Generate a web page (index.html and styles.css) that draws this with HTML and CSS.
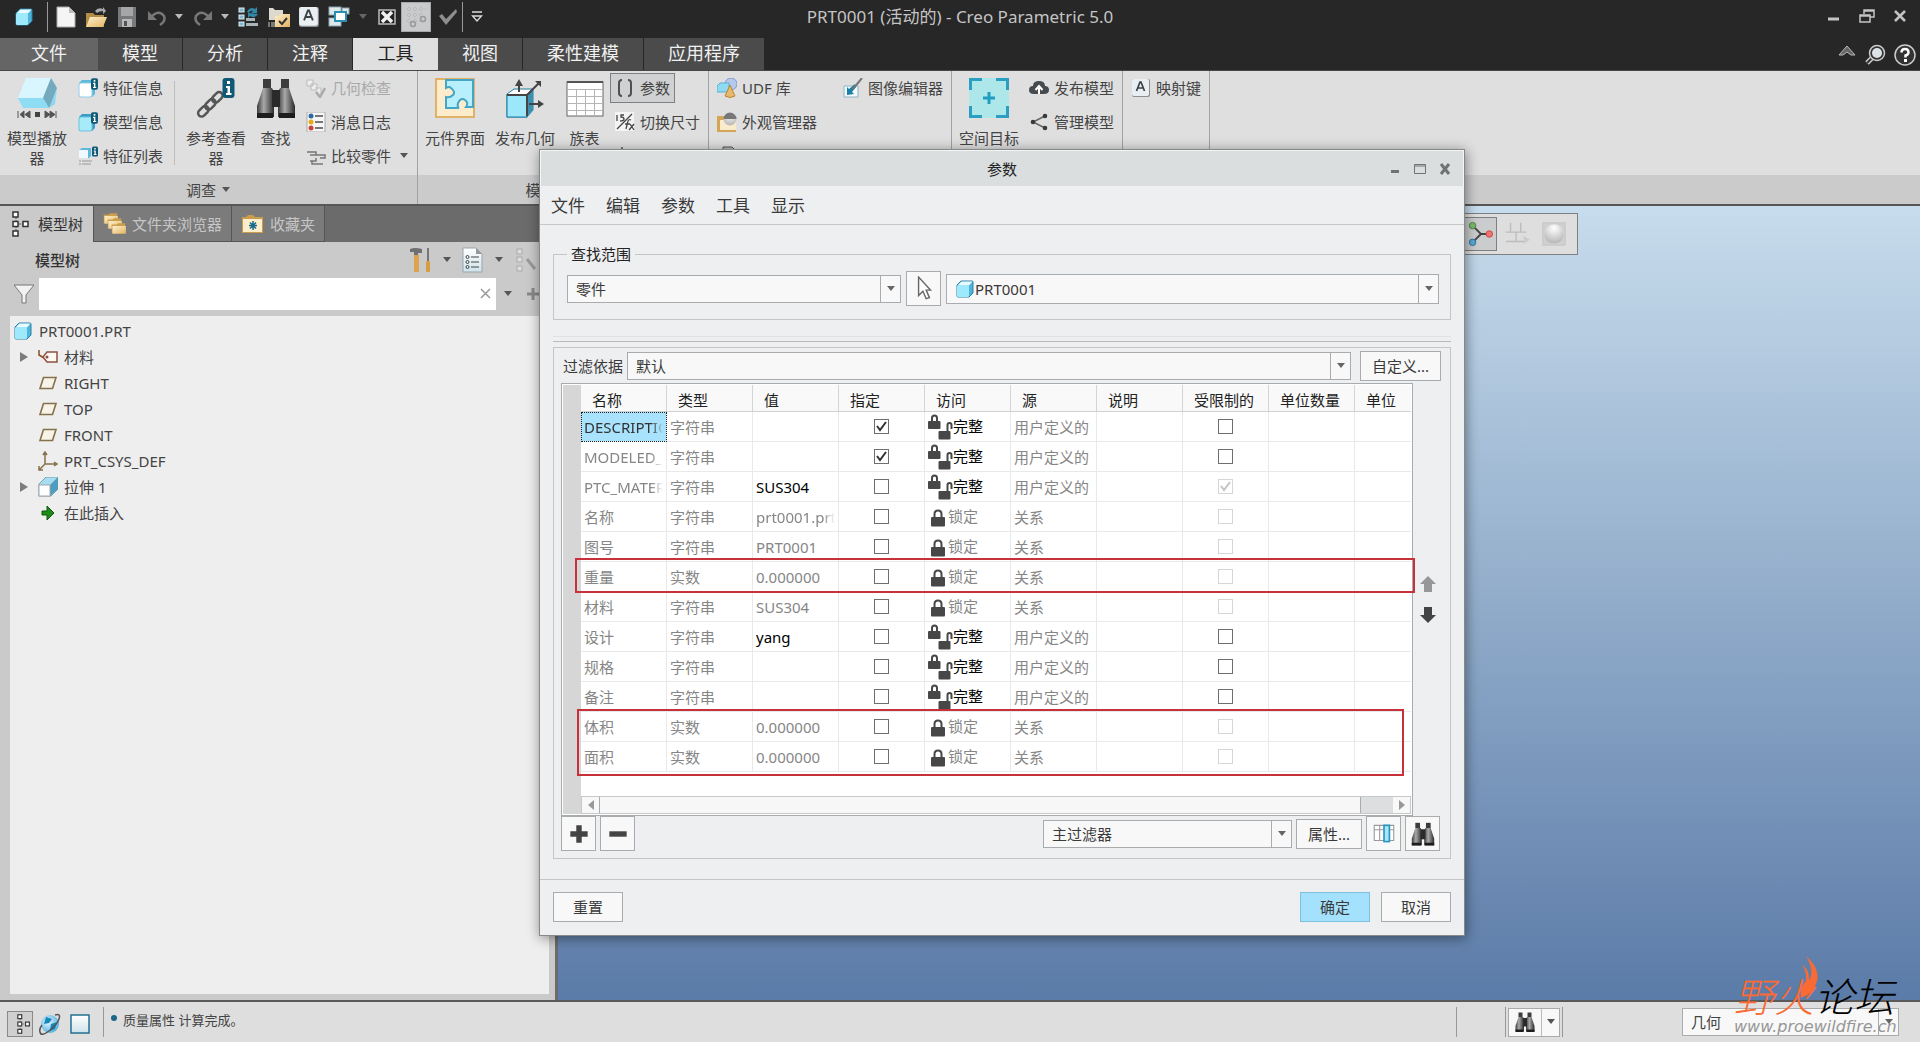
FILE: index.html
```html
<!DOCTYPE html>
<html lang="zh-CN">
<head>
<meta charset="utf-8">
<title>PRT0001 (活动的) - Creo Parametric 5.0</title>
<link rel="stylesheet" href="styles.css">
</head>
<body>
<svg class="defs" aria-hidden="true">
  <defs>
    <linearGradient id="g-cyan" x1="0" y1="0" x2="1" y2="1"><stop offset="0" stop-color="#d6f5fe"/><stop offset="1" stop-color="#7fd3ef"/></linearGradient>
    <linearGradient id="g-page" x1="0" y1="0" x2="0" y2="1"><stop offset="0" stop-color="#ffffff"/><stop offset="1" stop-color="#cfe3ea"/></linearGradient>
    <linearGradient id="g-barrel" x1="0" y1="0" x2="1" y2="0"><stop offset="0" stop-color="#3a3a3a"/><stop offset=".4" stop-color="#a9a9a9"/><stop offset="1" stop-color="#2a2a2a"/></linearGradient>
    <linearGradient id="g-gold" x1="0" y1="0" x2="1" y2="1"><stop offset="0" stop-color="#fff0cf"/><stop offset="1" stop-color="#e3b45e"/></linearGradient>
    <radialGradient id="g-ball" cx=".5" cy=".2" r=".7"><stop offset="0" stop-color="#ffffff"/><stop offset="1" stop-color="#bdbdbd"/></radialGradient>
    <radialGradient id="g-globe" cx=".4" cy=".4" r=".6"><stop offset="0" stop-color="#e5f7ff"/><stop offset="1" stop-color="#5bb4de"/></radialGradient>
    <symbol id="i-cube" viewBox="0 0 20 20"><path d="M2 6 6 2H17Q18 2 18 3V14L14 18H3Q2 18 2 17Z" fill="#4fb4dc" stroke="#2f7fa3"/><path d="M2.500 6.500 6.500 2.500H17.500L14 6.500Z" fill="#e8fbff"/><rect x="2" y="6" width="12" height="12" rx="1.500" fill="#9ee9fb"/></symbol>
    <symbol id="i-find" viewBox="0 0 40 40"><path d="M7 1H15V10H7ZM25 1H33V10H25Z" fill="#3c3c3c"/><path d="M7 10H16L18 14V39H1V28Z" fill="url(#g-barrel)"/><path d="M33 10H24L22 14V39H39V28Z" fill="url(#g-barrel)"/><rect x="16" y="12" width="8" height="17" fill="#2a2a2a"/><path d="M1 35H17V40H1ZM23 35H39V40H23Z" fill="#1d1d1d"/></symbol>
    <symbol id="i-info" viewBox="0 0 12 20"><rect x="0" y="0" width="12" height="20" rx="3" fill="#0f5876"/><rect x="4.500" y="3" width="3" height="3" fill="#fff"/><path d="M3.500 8H7.500V15H9V17H3.500V15H5V10H3.500Z" fill="#fff"/></symbol>
    <symbol id="i-nodes" viewBox="0 0 18 26"><path d="M4 6V20M4 13H12" stroke="#555" stroke-dasharray="2 1" fill="none"/><g fill="#fff" stroke="#333" stroke-width="1.500"><rect x="1" y="1" width="5" height="5"/><rect x="1" y="10.500" width="5" height="5"/><rect x="1" y="20" width="5" height="5"/><rect x="11" y="10.500" width="5" height="5"/></g></symbol>
    <symbol id="i-plane" viewBox="0 0 20 20"><path d="M5.500 4.500H18L14.500 15.500H2Z" fill="#f7f3e8" stroke="#85714a" stroke-width="1.600"/></symbol>
    <symbol id="i-lock" viewBox="0 0 16 18"><path d="M4.500 8V5Q4.500 1.500 8 1.500T11.500 5V8" fill="none" stroke="#474747" stroke-width="2"/><rect x="1" y="8" width="14" height="9.500" rx="1" fill="#474747"/></symbol>
    <symbol id="i-full" viewBox="0 0 26 26"><path d="M5 8V4Q5 1.500 7.500 1.500T10 4V8" fill="none" stroke="#474747" stroke-width="2"/><rect x="1" y="7" width="12.500" height="8" rx="1" fill="#474747"/><path d="M20.500 17V11Q20.500 9 22.500 9T24.500 11V15" fill="none" stroke="#474747" stroke-width="2"/><rect x="11.500" y="17" width="12" height="8.500" rx="1" fill="#474747"/></symbol>
    <symbol id="i-key" viewBox="0 0 20 20"><rect x="1" y="1" width="18" height="18" rx="2" fill="#8a8f92"/><rect x="1" y="1" width="17" height="17" rx="2" fill="#e9eff2"/><path d="M5.500 13 9 4H10L13.500 13M7 10H12" fill="none" stroke="#3c4347" stroke-width="1.700"/></symbol>
    <symbol id="i-folder" viewBox="0 0 24 24"><path d="M1 5H8L10 3H20V17H1Z" fill="#c99d4b"/><path d="M2 7H21V18H2Z" fill="url(#g-gold)"/></symbol>
    <symbol id="i-caret" viewBox="0 0 10 6"><path d="M1 0H9L5 5Z" fill="currentColor"/></symbol>
  </defs>
</svg>

<header class="titlebar">
  <div class="quick">
    <svg class="q20 app" viewBox="0 0 20 20"><use href="#i-cube"/></svg>
    <i class="vline"></i>
    <button class="q22" aria-label="新建"><svg viewBox="0 0 22 22"><path d="M2 1H14L20 7V21H2Z" fill="#f5f5f5" stroke="#aaa"/><path d="M14 1V7H20Z" fill="#bbb"/></svg></button>
    <button class="q22 g8" aria-label="打开"><svg viewBox="0 0 22 22"><path d="M1 7H8L10 9H19V21H1Z" fill="#b38c46"/><path d="M5 11H22L18 21H1Z" fill="url(#g-gold)"/><path d="M10 5Q13 1 18 3V1L21 5L18 8V5Q14 5 12 7Z" fill="#aaa"/></svg></button>
    <button class="q20 g10" aria-label="保存"><svg viewBox="0 0 20 20"><path d="M1 0H19V20H1Z" fill="#77797a"/><rect x="4" y="0" width="12" height="9" fill="#a4a6a7"/><rect x="5" y="12" width="10" height="8" fill="#b7b9ba"/><rect x="7" y="14" width="3" height="5" fill="#555"/></svg></button>
    <button class="q20 g10" aria-label="撤消"><svg viewBox="0 0 20 20"><path d="M1 4V13H10Z" fill="#777"/><path d="M4 10Q12 2 17 9Q19 14 13 18" fill="none" stroke="#777" stroke-width="2.500"/></svg></button>
    <button class="qc g8 light" aria-label="撤消列表"><svg viewBox="0 0 10 6"><use href="#i-caret"/></svg></button>
    <button class="q20 g10" aria-label="重做"><svg viewBox="0 0 20 20"><path d="M19 4V13H10Z" fill="#777"/><path d="M16 10Q8 2 3 9Q1 14 7 18" fill="none" stroke="#777" stroke-width="2.500"/></svg></button>
    <button class="qc g8 light" aria-label="重做列表"><svg viewBox="0 0 10 6"><use href="#i-caret"/></svg></button>
    <button class="q22 g8" aria-label="重新生成"><svg viewBox="0 0 22 22"><g fill="#7fb9cf" stroke="#dfeff4"><rect x="1" y="2" width="5" height="4"/><rect x="1" y="9" width="5" height="4"/><rect x="1" y="16" width="5" height="4"/></g><path d="M8 12H17V15H8ZM8 17H20V20H8Z" fill="#a9b4b8"/><path d="M9 6Q12 0 17 3L19 1V7H13L15 5Q12 4 11 7ZM20 8Q17 13 12 10L10 12V7" fill="#3287a8"/></svg></button>
    <button class="q22 g8" aria-label="工作目录"><svg viewBox="0 0 22 22"><path d="M1 2H5L7 4H15V14H1Z" fill="#ded9ce"/><path d="M7 10H11L13 8H22V21H7Z" fill="url(#g-gold)"/><path d="M11 15 14 18 19 12" fill="none" stroke="#333" stroke-width="2"/><path d="M1 16V21M4 16V21M6 16V21" stroke="#ccc"/></svg></button>
    <button class="q22 g8" aria-label="映射键"><svg viewBox="0 0 20 20"><use href="#i-key"/></svg></button>
    <button class="q22 g8" aria-label="窗口"><svg viewBox="0 0 22 22"><g fill="#dce8ec" stroke="#8ba4ad"><rect x="1" y="1" width="12" height="8"/><rect x="1" y="12" width="12" height="8"/><rect x="14" y="2" width="7" height="6"/></g><rect x="7" y="6" width="11" height="9" fill="#fff" stroke="#2b8fb4" stroke-width="2"/></svg></button>
    <button class="qc g8 dim" aria-label="窗口列表"><svg viewBox="0 0 10 6"><use href="#i-caret"/></svg></button>
    <button class="q20 g10" aria-label="关闭窗口"><svg viewBox="0 0 20 20"><path d="M2 3H18V17H2Z" fill="#222" stroke="#bcbcbc" stroke-width="1.500"/><path d="M5 5 15 15M15 5 5 15" stroke="#f0f0f0" stroke-width="3.500"/></svg></button>
    <button class="snap" aria-label="捕捉"><svg viewBox="0 0 28 28"><path d="M5 6H24M5 12H20M5 18H20M7 4V20M13 4V20M19 4V14" stroke="#aaa" stroke-dasharray="1 2"/><circle cx="21" cy="16" r="2.500" fill="none" stroke="#999" stroke-width="1.500"/><circle cx="11" cy="21" r="2.500" fill="none" stroke="#999" stroke-width="1.500"/></svg></button>
    <button class="q20 g8" aria-label="确认"><svg viewBox="0 0 20 20"><path d="M1 9 4 7 8 12 18 2 19 5 8 18Z" fill="#8e8e8e"/></svg></button>
    <i class="vline g4"></i>
    <button class="q20 g4" aria-label="自定义快速访问"><svg viewBox="0 0 20 20"><path d="M5 5H15" stroke="#ddd" stroke-width="1.500"/><path d="M5.500 9H14.500L10 14Z" fill="none" stroke="#ddd" stroke-width="1.300"/></svg></button>
  </div>
  <h1>PRT0001 (活动的) - Creo Parametric 5.0</h1>
  <div class="winctl">
    <button aria-label="最小化"><svg viewBox="0 0 16 16"><path d="M2 11H13" stroke="#c4c4c4" stroke-width="3"/></svg></button>
    <button aria-label="还原"><svg viewBox="0 0 16 16"><path d="M5 6V2H15V9H11M5 3H15" fill="none" stroke="#c4c4c4" stroke-width="1.500"/><path d="M1 7H11V14H1ZM1 8H11" fill="none" stroke="#c4c4c4" stroke-width="1.500"/></svg></button>
    <button aria-label="关闭"><svg viewBox="0 0 16 16"><path d="M3 3 13 13M13 3 3 13" stroke="#c4c4c4" stroke-width="2.500"/></svg></button>
  </div>
</header>

<nav class="tabs">
  <button class="file">文件</button><button>模型</button><button>分析</button><button>注释</button><button class="on">工具</button><button>视图</button><button>柔性建模</button><button>应用程序</button>
  <div class="tabtools">
    <button aria-label="折叠功能区"><svg viewBox="0 0 22 22"><path d="M3 11 11 2 19 11 15 11 11 8 7 11Z" fill="#666" stroke="#bbb"/></svg></button>
    <button aria-label="搜索"><svg viewBox="0 0 22 22"><path d="M7 14 2 19" stroke="#ccc" stroke-width="5"/><path d="M7 14 2 19" stroke="#333" stroke-width="2"/><circle cx="12" cy="9" r="7.500" fill="#333" stroke="#ccc" stroke-width="1.500"/><circle cx="12" cy="9" r="5" fill="#dde4e8"/></svg></button>
    <button aria-label="帮助"><svg viewBox="0 0 22 22"><circle cx="11" cy="11" r="10" fill="#333" stroke="#ccc" stroke-width="1.500"/><path d="M7.500 8.500Q7.500 5 11 5T14.500 8.500Q14.500 10.500 11.500 11.500V13.500" fill="none" stroke="#fff" stroke-width="2.500"/><rect x="10" y="15" width="3" height="3" fill="#fff"/></svg></button>
  </div>
</nav>

<section class="ribbon">
  <div class="group">
    <div class="tools lead">
      <button class="big"><svg viewBox="0 0 40 40"><path d="M9 0H34L40 10 38 26 32 30H6L1 20Z" fill="url(#g-cyan)"/><path d="M9 0H34L26 20H1Z" fill="#d9f5fd"/><path d="M34 0 40 10 32 30 26 20Z" fill="#74aabd"/><path d="M1 20H26L32 30H6Z" fill="#8fdcf5"/><path d="M1 33V40M7 33 3 36.500 7 40ZM13 33 8 36.500 13 40ZM28 33 33 36.500 28 40ZM33 33 38 36.500 33 40ZM39 33V40" stroke="#555" fill="#555"/><rect x="18" y="34" width="5" height="5" fill="#444"/></svg><span>模型播放器</span></button>
      <div class="col">
        <button class="small"><svg viewBox="0 0 20 20"><path d="M1 5 4 2H17V16L14 19H1Z" fill="#5eb8dc"/><rect x="1" y="5" width="13" height="14" rx="2" fill="#fff" stroke="#8fd0e8"/><svg x="13" y="0" width="7" height="12"><use href="#i-info"/></svg></svg>特征信息</button>
        <button class="small"><svg viewBox="0 0 20 20"><path d="M1 5 4 2H17V16L14 19H1Z" fill="#3b9cc6"/><rect x="1" y="5" width="13" height="14" rx="2" fill="#a7eafa" stroke="#6cc3e0"/><svg x="13" y="0" width="7" height="12"><use href="#i-info"/></svg></svg>模型信息</button>
        <button class="small"><svg viewBox="0 0 20 20"><path d="M1 4 4 2H13V10L11 12H1Z" fill="#5eb8dc"/><rect x="1" y="4" width="9" height="8" fill="#eefaff"/><path d="M1 15H14M1 18H13" stroke="#999" stroke-dasharray="2 1 9 0"/><svg x="14" y="0" width="6" height="11"><use href="#i-info"/></svg></svg>特征列表</button>
      </div>
      <i class="rule"></i>
      <button class="big"><svg viewBox="0 0 40 40"><g fill="none" stroke="#555" stroke-width="2.500"><rect x="1" y="30" width="12" height="7" rx="3.500" transform="rotate(-45 7 33)"/><rect x="8" y="23" width="12" height="7" rx="3.500" transform="rotate(-45 14 26)"/><rect x="15" y="16" width="12" height="7" rx="3.500" transform="rotate(-45 21 19)"/></g><svg x="26" y="0" width="13" height="20"><use href="#i-info"/></svg></svg><span>参考查看器</span></button>
      <button class="big fit"><svg viewBox="0 0 40 40"><use href="#i-find"/></svg><span>查找</span></button>
      <div class="col">
        <button class="small" disabled><svg viewBox="0 0 20 20"><path d="M1 2H7V8H1ZM5 6H11V12H5ZM9 10H15V16" fill="#eee" stroke="#bbb"/><path d="M10 14 14 19 19 10" fill="none" stroke="#aaa" stroke-width="2.500"/></svg>几何检查</button>
        <button class="small"><svg viewBox="0 0 20 20"><rect x="1" y="0" width="18" height="20" fill="#f6f6f6" stroke="#aaa"/><circle cx="5" cy="4" r="2.500" fill="#2a6ba5"/><circle cx="5" cy="10" r="2.500" fill="#e8a917"/><circle cx="5" cy="16" r="2.500" fill="#c9453c"/><path d="M9 4H17M9 10H17M9 16H17" stroke="#777" stroke-width="2"/></svg>消息日志</button>
        <button class="small"><svg viewBox="0 0 20 20"><path d="M1 6H10V9M4 9H19V12H14M10 12V15H4M6 15V18H17" fill="none" stroke="#777" stroke-width="1.500"/></svg>比较零件<svg class="caret" viewBox="0 0 10 6"><use href="#i-caret"/></svg></button>
      </div>
    </div>
    <div class="band">调查<svg class="caret" viewBox="0 0 10 6"><use href="#i-caret"/></svg></div>
  </div>
  <div class="group">
    <div class="tools lead">
      <button class="big"><svg viewBox="0 0 40 40"><path d="M1 1H39V39H1Z" fill="#fdeccb" stroke="#dfb268" stroke-width="2"/><path d="M11 2H38V29H31Q34 25 30 22T23 25Q22 29 24 30H11V19Q15 20 18 17T16 10Q14 8 11 10Z" fill="#b7f0fc" stroke="#45a5c8" stroke-width="2"/></svg><span>元件界面</span></button>
      <button class="big wide"><svg viewBox="0 0 40 40"><path d="M2 16 9 11H28L28 32 22 39H2Z" fill="#fff" stroke="#1f7ca1"/><rect x="2" y="17" width="20" height="22" fill="#9ce7fa" stroke="#1f7ca1"/><path d="M22 17 28 11V32L22 39Z" fill="#3c8fae"/><path d="M2 17H22V38M22 17 34 5M14 14V4M24 26H36" stroke="#444" stroke-width="2" fill="none"/><path d="M10 8 14 1 18 8ZM30 3H36V9ZM33 22 39 26 33 30Z" fill="#444"/></svg><span>发布几何</span></button>
      <button class="big fit"><svg viewBox="0 0 40 40"><rect x="2" y="4" width="36" height="34" fill="#fff" stroke="#666"/><path d="M2 4H38" stroke="#555" stroke-width="2"/><path d="M2 11.500H38M2 18.500H38M2 25.500H38M2 32.500H38M11.500 11V38M20.500 11V38M29.500 11V38" stroke="#b5b5b5"/></svg><span>族表</span></button>
      <div class="col">
        <button class="small pressed"><svg viewBox="0 0 20 20"><path d="M7 2Q4 2 4 5V15Q4 18 7 18M13 2Q16 2 16 5V15Q16 18 13 18" fill="none" stroke="#4e5153" stroke-width="2"/></svg>参数</button>
        <button class="small"><svg viewBox="0 0 20 20"><rect x="0" y="0" width="19" height="19" fill="#f4f4f4"/><path d="M2 3V9M9 3H6V5Q9 5 9 7T5 9M2 17 17 2M11 17 13 9Q14 7 16 8M10 12H15M15 12 19 18M19 12 14 18" fill="none" stroke="#444" stroke-width="1.300"/></svg>切换尺寸</button>
        <button class="small" aria-label="关系"><svg viewBox="0 0 20 20"><path d="M6 1H8V16H6Z" fill="#777"/></svg></button>
      </div>
    </div>
    <div class="band">模型意图<svg class="caret" viewBox="0 0 10 6"><use href="#i-caret"/></svg></div>
  </div>
  <div class="group">
    <div class="tools">
      <div class="col">
        <button class="small"><svg viewBox="0 0 20 20"><circle cx="14" cy="6" r="6" fill="#b5c8ee" stroke="#8296cb"/><path d="M0 8 3 5H12V12L10 14H0Z" fill="#8fdaf2" stroke="#55b1d2"/><path d="M13 7 18 18Q13 21 8 18Z" fill="#e8b96c" stroke="#b98839"/></svg>UDF 库</button>
        <button class="small"><svg viewBox="0 0 20 20"><path d="M0 4H7L9 6H19V20H0Z" fill="#d4a557"/><path d="M3 8H19V18H3Z" fill="#faebcb"/><circle cx="13" cy="7" r="6.500" fill="url(#g-ball)"/><path d="M6.500 7A6.500 6.500 0 0 1 13 .5V7ZM13 7H19.500A6.500 6.500 0 0 0 13 .5Z" fill="#777"/></svg>外观管理器</button>
        <button class="small" aria-label="辅助应用程序"><svg viewBox="0 0 20 20"><path d="M6 1H15L18 4V18H6Z" fill="#bbb" stroke="#555"/></svg></button>
      </div>
      <div class="col second">
        <button class="small"><svg viewBox="0 0 20 20"><path d="M1 8H15V19H1Z" fill="#f2fafc" stroke="#8fb4c1"/><path d="M4 17V9L6 11 12 6 13 9 9 14 11 16Z" fill="#1b7fa6"/><path d="M10 11 19 0" stroke="#777" stroke-width="2"/></svg>图像编辑器</button>
      </div>
    </div>
    <div class="band"></div>
  </div>
  <div class="group">
    <div class="tools lead tight">
      <button class="big"><svg viewBox="0 0 40 40"><rect width="40" height="40" fill="#aee7e9"/><path d="M1.500 12V1.500H13M27 1.500H38.500V12M38.500 28V38.500H27M13 38.500H1.500V28" fill="none" stroke="#2a9fbf" stroke-width="3"/><path d="M20 14V26M14 20H26" stroke="#1e9ec0" stroke-width="3"/></svg><span>空间目标</span></button>
      <div class="col">
        <button class="small"><svg viewBox="0 0 20 20"><path d="M5 16Q0 16 0 12T4 8Q4 3 10 3T16 8Q20 8 20 12T15 16Z" fill="#454b4e"/><path d="M10 16V10M6.500 12 10 8 13.500 12" stroke="#fff" stroke-width="2" fill="none"/></svg>发布模型</button>
        <button class="small"><svg viewBox="0 0 20 20"><path d="M16 4 4 10 16 16" fill="none" stroke="#666" stroke-width="1.500"/><circle cx="16" cy="4" r="2.300" fill="#3a3a3a"/><circle cx="4" cy="10" r="2.300" fill="#3a3a3a"/><circle cx="16" cy="16" r="2.300" fill="#3a3a3a"/></svg>管理模型</button>
      </div>
    </div>
    <div class="band"></div>
  </div>
  <div class="group">
    <div class="tools">
      <div class="col"><button class="small"><svg viewBox="0 0 20 20"><use href="#i-key"/></svg>映射键</button></div>
    </div>
    <div class="band"></div>
  </div>
  <div class="rest"><div class="tools"></div><div class="band"></div></div>
</section>

<main>
  <aside>
    <div class="sidetabs">
      <button class="on"><svg class="w18" viewBox="0 0 18 26"><use href="#i-nodes"/></svg>模型树</button>
      <button><svg class="w24" viewBox="0 0 24 24"><svg x="0" y="-1" width="17" height="17"><use href="#i-folder"/></svg><svg x="4" y="4" width="17" height="17"><use href="#i-folder"/></svg><svg x="8" y="9" width="17" height="17"><use href="#i-folder"/></svg></svg>文件夹浏览器</button>
      <button><svg class="w24" viewBox="0 0 24 24"><path d="M1 5H5L7 3H12L14 5H22V21H1Z" fill="#c99d4b"/><path d="M2 7H21V20H2Z" fill="#ffeec9"/><path d="M12 9V18M8 13.500H16M9 10.500 15 16.500M15 10.500 9 16.500" stroke="#176a8e" stroke-width="1.500"/></svg>收藏夹</button>
    </div>
    <div class="sidehead">
      <h2>模型树</h2>
      <button aria-label="设置"><svg viewBox="0 0 24 26"><path d="M1 2Q6 0 13 2V6H9V8H5V5H1Z" fill="#6e7072"/><rect x="5" y="8" width="5" height="17" fill="#dca34c"/><path d="M18 1H20V14H18Z" fill="#777"/><rect x="17" y="14" width="4" height="11" rx="1" fill="#d99c40"/></svg></button>
      <svg class="caret" viewBox="0 0 10 6"><use href="#i-caret"/></svg>
      <button aria-label="显示"><svg viewBox="0 0 24 26"><path d="M2 1H15L21 7V25H2Z" fill="url(#g-page)" stroke="#99a5aa"/><path d="M15 1V7H21Z" fill="#999"/><path d="M10 10H18M10 15H18M10 20H18" stroke="#444"/><g fill="none" stroke="#444"><circle cx="6.500" cy="10" r="1.500"/><circle cx="6.500" cy="15" r="1.500"/><circle cx="6.500" cy="20" r="1.500"/></g></svg></button>
      <svg class="caret" viewBox="0 0 10 6"><use href="#i-caret"/></svg>
      <button aria-label="选择节点" disabled><svg viewBox="0 0 24 26"><g fill="#ddd" stroke="#aaa"><rect x="4" y="2" width="5" height="5"/><rect x="4" y="10" width="5" height="5"/><rect x="4" y="19" width="5" height="5"/></g><path d="M14 12 22 22" stroke="#999" stroke-width="3"/></svg></button>
    </div>
    <div class="search">
      <svg class="filter" viewBox="0 0 20 20"><path d="M0 1H20L12 11V19H8V11Z" fill="#f2f2f2" stroke="#777"/></svg>
      <label><input type="text" aria-label="搜索模型树"><svg viewBox="0 0 12 12"><path d="M2 1 11 10M11 1 2 10" stroke="#999" stroke-width="1.500"/></svg></label>
      <svg class="caret" viewBox="0 0 10 6"><use href="#i-caret"/></svg>
      <svg class="plus" viewBox="0 0 12 12"><path d="M6 0V12M0 6H12" stroke="#888" stroke-width="3"/></svg>
    </div>
    <ul class="tree">
      <li class="root"><svg viewBox="0 0 20 20"><use href="#i-cube"/></svg>PRT0001.PRT</li>
      <li class="open"><svg viewBox="0 0 20 20"><path d="M1 3V8L6 11" fill="none" stroke="#8a4b20" stroke-width="1.500"/><path d="M9 5H19V15H9L5 10Z" fill="#fff8f0" stroke="#8b5145" stroke-width="1.500"/><circle cx="9" cy="10" r="1.500" fill="#8b5145"/></svg>材料</li>
      <li><svg viewBox="0 0 20 20"><use href="#i-plane"/></svg>RIGHT</li>
      <li><svg viewBox="0 0 20 20"><use href="#i-plane"/></svg>TOP</li>
      <li><svg viewBox="0 0 20 20"><use href="#i-plane"/></svg>FRONT</li>
      <li><svg viewBox="0 0 20 20"><path d="M7 1V13H19M7 13 1 19M5 4 7 1 9 4M16 11 19 13 16 15M1 15V19H5" fill="none" stroke="#85714a" stroke-width="1.500"/></svg>PRT_CSYS_DEF</li>
      <li class="open"><svg viewBox="0 0 20 20"><path d="M1 7 8 0H20V12L13 19H1Z" fill="#a8dcf0" stroke="#7fa0ae"/><path d="M12 8 20 0V12L12 19Z" fill="#4e9dbe"/><rect x="1" y="8" width="11" height="11" fill="#fff" stroke="#a0a8ac"/></svg>拉伸 1</li>
      <li><svg viewBox="0 0 20 20"><path d="M4 8H9V3L16 10 9 17V12H4Z" fill="#1f8a1a" stroke="#0d5a0d"/></svg>在此插入</li>
    </ul>
  </aside>
  <div class="canvas">
    <div class="viewbar">
      <button class="on" aria-label="旋转中心"><svg viewBox="0 0 28 28"><path d="M6 5 15 14H24M15 14 6 23" fill="none" stroke="#444" stroke-width="2"/><circle cx="6" cy="5" r="3.500" fill="#7dbb6d" stroke="#4e7f45"/><circle cx="24" cy="14" r="3.500" fill="#ee7470" stroke="#c44"/><circle cx="6" cy="23" r="3.500" fill="#58a8d6" stroke="#2c6c99"/></svg></button>
      <button aria-label="基准显示"><svg viewBox="0 0 28 28"><path d="M7 2V12M18 2V12M2 12H24M13 12V22M2 22H22" fill="none" stroke="#bcbcbc" stroke-width="1.500"/><path d="M21 16 28 20 21 25Z" fill="#ccc"/></svg></button>
      <button aria-label="渲染"><svg viewBox="0 0 28 28"><rect x="2" y="2" width="24" height="24" fill="#d0d0d0" stroke="#c4c4c4"/><circle cx="14" cy="14" r="10.500" fill="url(#g-ball)"/></svg></button>
    </div>
  </div>
</main>

<footer>
  <button class="st on" aria-label="导航器"><svg viewBox="0 0 24 24"><svg x="9" y="2" width="14" height="20"><use href="#i-nodes"/></svg></svg></button>
  <button class="st" aria-label="浏览器"><svg viewBox="0 0 24 24"><circle cx="12" cy="12" r="9" fill="url(#g-globe)"/><path d="M8 5 14 7 11 11 6 12ZM13 12 19 10 17 17 12 19Z" fill="#1686bd"/><path d="M17 3Q23 1 21 7T11 19T2 20Q1 17 4 13" fill="none" stroke="#555" stroke-width="1.500"/></svg></button>
  <button class="st" aria-label="全屏"><svg viewBox="0 0 24 24"><rect x="3" y="3" width="18" height="18" fill="url(#g-page)" stroke="#24718f" stroke-width="1.500"/></svg></button>
  <i class="sline"></i>
  <p>质量属性 计算完成。</p>
  <i class="sline push"></i>
  <i class="sline far"></i>
  <div class="pair"><button aria-label="查找"><svg viewBox="0 0 40 40"><use href="#i-find"/></svg></button><button class="drop" aria-label="查找选项"><svg class="caret" viewBox="0 0 10 6"><use href="#i-caret"/></svg></button></div>
  <i class="sline"></i>
  <div class="combo geo"><select aria-label="选择过滤器"><option>几何</option></select></div>
  <div class="mark">
    <div class="zh"><b>野火</b>论坛</div>
    <svg viewBox="0 0 20 42"><path d="M6 0Q20 12 17 25T1 42Q-1 32 6 25Q7 16 2 9Q10 14 9 25Q15 15 6 0Z" fill="#fb6a33"/></svg>
    <div class="url">www.proewildfire.cn</div>
  </div>
</footer>

<section class="dialog" role="dialog" aria-labelledby="dlg-title">
  <div class="dlgtitle"><h2 id="dlg-title">参数</h2>
    <div class="dlgctl">
      <button aria-label="最小化"><svg viewBox="0 0 12 12"><path d="M2 8.500H10" stroke="#6f7375" stroke-width="3"/></svg></button>
      <button aria-label="最大化"><svg viewBox="0 0 12 12"><path d="M.5 1.500H11.500V10.500H.5ZM0 3H12" fill="none" stroke="#6f7375"/></svg></button>
      <button aria-label="关闭"><svg viewBox="0 0 12 12"><path d="M2 1 10 11M10 1 2 11" stroke="#6f7375" stroke-width="3"/></svg></button>
    </div>
  </div>
  <nav class="menu"><button>文件</button><button>编辑</button><button>参数</button><button>工具</button><button>显示</button></nav>
  <div class="dlgbody">
    <fieldset>
      <legend>查找范围</legend>
      <div class="scope">
        <div class="combo kind"><select aria-label="对象类型"><option>零件</option></select></div>
        <button class="sq" aria-label="选择对象"><svg viewBox="0 0 24 24"><path d="M7 1V18L11 14 14 21 17 20 14 13H18Z" fill="#fff" stroke="#666" stroke-width="1.300"/></svg></button>
        <div class="combo part"><svg viewBox="0 0 20 20"><use href="#i-cube"/></svg><select aria-label="对象"><option>PRT0001</option></select></div>
      </div>
    </fieldset>
    <div class="splitter"></div>
    <div class="panel">
      <div class="filterrow">
        <label for="flt">过滤依据</label>
        <div class="combo"><select id="flt"><option>默认</option></select></div>
        <button class="btn">自定义...</button>
      </div>
      <div class="tablerow">
        <div class="frame">
          <table>
            <colgroup><col class="gut"><col><col><col><col><col><col><col><col><col><col class="last"></colgroup>
            <thead><tr><th class="gut"></th><th>名称</th><th>类型</th><th>值</th><th>指定</th><th>访问</th><th>源</th><th>说明</th><th>受限制的</th><th>单位数量</th><th>单位</th></tr></thead>
            <tbody>
              <tr><td class="gut"></td><td class="sel"><span>DESCRIPTION</span></td><td>字符串</td><td></td><td class="ck"><input type="checkbox" aria-label="指定" checked></td><td class="full"><svg viewBox="0 0 26 26"><use href="#i-full"/></svg>完整</td><td>用户定义的</td><td></td><td class="ck"><input type="checkbox" aria-label="受限制的"></td><td></td><td></td></tr>
              <tr><td class="gut"></td><td><span>MODELED_BY</span></td><td>字符串</td><td></td><td class="ck"><input type="checkbox" aria-label="指定" checked></td><td class="full"><svg viewBox="0 0 26 26"><use href="#i-full"/></svg>完整</td><td>用户定义的</td><td></td><td class="ck"><input type="checkbox" aria-label="受限制的"></td><td></td><td></td></tr>
              <tr><td class="gut"></td><td><span>PTC_MATERIAL</span></td><td>字符串</td><td class="edit">SUS304</td><td class="ck"><input type="checkbox" aria-label="指定"></td><td class="full"><svg viewBox="0 0 26 26"><use href="#i-full"/></svg>完整</td><td>用户定义的</td><td></td><td class="ck"><input type="checkbox" aria-label="受限制的" checked disabled></td><td></td><td></td></tr>
              <tr><td class="gut"></td><td>名称</td><td>字符串</td><td><span>prt0001.prt</span></td><td class="ck"><input type="checkbox" aria-label="指定"></td><td class="lock"><svg viewBox="0 0 16 18"><use href="#i-lock"/></svg>锁定</td><td>关系</td><td></td><td class="ck"><input type="checkbox" aria-label="受限制的" disabled></td><td></td><td></td></tr>
              <tr><td class="gut"></td><td>图号</td><td>字符串</td><td>PRT0001</td><td class="ck"><input type="checkbox" aria-label="指定"></td><td class="lock"><svg viewBox="0 0 16 18"><use href="#i-lock"/></svg>锁定</td><td>关系</td><td></td><td class="ck"><input type="checkbox" aria-label="受限制的" disabled></td><td></td><td></td></tr>
              <tr><td class="gut"></td><td>重量</td><td>实数</td><td>0.000000</td><td class="ck"><input type="checkbox" aria-label="指定"></td><td class="lock"><svg viewBox="0 0 16 18"><use href="#i-lock"/></svg>锁定</td><td>关系</td><td></td><td class="ck"><input type="checkbox" aria-label="受限制的" disabled></td><td></td><td></td></tr>
              <tr><td class="gut"></td><td>材料</td><td>字符串</td><td>SUS304</td><td class="ck"><input type="checkbox" aria-label="指定"></td><td class="lock"><svg viewBox="0 0 16 18"><use href="#i-lock"/></svg>锁定</td><td>关系</td><td></td><td class="ck"><input type="checkbox" aria-label="受限制的" disabled></td><td></td><td></td></tr>
              <tr><td class="gut"></td><td>设计</td><td>字符串</td><td class="edit">yang</td><td class="ck"><input type="checkbox" aria-label="指定"></td><td class="full"><svg viewBox="0 0 26 26"><use href="#i-full"/></svg>完整</td><td>用户定义的</td><td></td><td class="ck"><input type="checkbox" aria-label="受限制的"></td><td></td><td></td></tr>
              <tr><td class="gut"></td><td>规格</td><td>字符串</td><td></td><td class="ck"><input type="checkbox" aria-label="指定"></td><td class="full"><svg viewBox="0 0 26 26"><use href="#i-full"/></svg>完整</td><td>用户定义的</td><td></td><td class="ck"><input type="checkbox" aria-label="受限制的"></td><td></td><td></td></tr>
              <tr><td class="gut"></td><td>备注</td><td>字符串</td><td></td><td class="ck"><input type="checkbox" aria-label="指定"></td><td class="full"><svg viewBox="0 0 26 26"><use href="#i-full"/></svg>完整</td><td>用户定义的</td><td></td><td class="ck"><input type="checkbox" aria-label="受限制的"></td><td></td><td></td></tr>
              <tr><td class="gut"></td><td>体积</td><td>实数</td><td>0.000000</td><td class="ck"><input type="checkbox" aria-label="指定"></td><td class="lock"><svg viewBox="0 0 16 18"><use href="#i-lock"/></svg>锁定</td><td>关系</td><td></td><td class="ck"><input type="checkbox" aria-label="受限制的" disabled></td><td></td><td></td></tr>
              <tr><td class="gut"></td><td>面积</td><td>实数</td><td>0.000000</td><td class="ck"><input type="checkbox" aria-label="指定"></td><td class="lock"><svg viewBox="0 0 16 18"><use href="#i-lock"/></svg>锁定</td><td>关系</td><td></td><td class="ck"><input type="checkbox" aria-label="受限制的" disabled></td><td></td><td></td></tr>
            </tbody>
          </table>
          <div class="under">
            <div class="hscroll"><button aria-label="向左"><svg viewBox="0 0 6 10"><path d="M6 0V10L0 5Z" fill="#999"/></svg></button><div class="track"><div class="thumb"></div></div><button aria-label="向右"><svg viewBox="0 0 6 10"><path d="M0 0V10L6 5Z" fill="#999"/></svg></button></div>
          </div>
          <div class="note weight"></div>
          <div class="note volume"></div>
        </div>
        <div class="movers">
          <button aria-label="上移" disabled><svg viewBox="0 0 16 16"><path d="M8 0 16 8H12V16H4V8H0Z" fill="#979797"/></svg></button>
          <button aria-label="下移"><svg viewBox="0 0 16 16"><path d="M8 16 16 8H12V0H4V8H0Z" fill="#444"/></svg></button>
        </div>
      </div>
      <div class="actions">
        <button class="sq" aria-label="添加参数"><svg viewBox="0 0 24 24"><path d="M12 4V20M4 12H20" stroke="#444" stroke-width="5"/></svg></button>
        <button class="sq" aria-label="删除参数"><svg viewBox="0 0 24 24"><path d="M4 12H20" stroke="#444" stroke-width="5"/></svg></button>
        <div class="combo main"><select aria-label="过滤器"><option>主过滤器</option></select></div>
        <button class="btn">属性...</button>
        <button class="sq" aria-label="设置列"><svg viewBox="0 0 24 24"><path d="M3 4H21V18H3ZM3 8H21M8 4V18" fill="#fff" stroke="#9a9a9a"/><rect x="12" y="4" width="5" height="15" fill="#a8e5fa" stroke="#2795bf" stroke-width="1.500"/></svg></button>
        <button class="sq" aria-label="查找参数"><svg viewBox="-1 -2 42 44"><use href="#i-find" width="40" height="40"/></svg></button>
      </div>
    </div>
  </div>
  <div class="dlgfoot"><button class="btn">重置</button><button class="btn ok">确定</button><button class="btn">取消</button></div>
</section>
</body>
</html>
```
FILE: styles.css
```css
* { box-sizing: border-box; }
body { margin: 0; height: 100vh; min-height: 900px; display: flex; flex-direction: column; position: relative; overflow: hidden; background: #dedede; color: #444; font: 15px/20px "Noto Sans", "Noto Sans CJK SC", sans-serif; }
button, select, input { font: inherit; color: inherit; border: 0; padding: 0; margin: 0; background: none; border-radius: 0; }
button { white-space: nowrap; }
svg { display: block; flex: none; }
h1, h2, p, ul { margin: 0; padding: 0; font-weight: 400; }
.defs { position: absolute; width: 0; height: 0; }
.caret { width: 10px; height: 6px; color: #555; }

/* title bar */
.titlebar { height: 38px; background: #272727; display: grid; grid-template-columns: 1fr auto 1fr; align-items: start; }
.titlebar h1 { font-size: 17px; line-height: 34px; color: #c4c4c4; }
.quick { display: flex; align-items: center; height: 34px; padding-left: 14px; }
.quick > button > svg { width: 100%; height: 100%; }
.quick > * { flex: none; }
.q20 { width: 20px; height: 20px; }
.quick .app { margin-right: 13px; }
.q22 { width: 22px; height: 22px; }
.qc { width: 10px; height: 6px; }
.light { color: #b9b9b9; }
.dim { color: #666; }
.g4 { margin-left: 4px; }
.g8 { margin-left: 7px; }
.qc + .q22, .q22 + .q22.g8, .q22 + .qc { margin-left: 8px; }
.g10 { margin-left: 10px; }
.qc + .q20 { margin-left: 9px; }
.vline { width: 1px; height: 30px; background: #999; }
.vline + .q22 { margin-left: 7px; }
.snap { width: 30px; height: 30px; margin-left: 4px; background: #c9cacb; border: 1px solid #a9a9a9; }
.winctl { display: flex; justify-content: flex-end; gap: 17px; padding: 8px 12px 0 0; }
.winctl svg { width: 16px; height: 16px; }

/* ribbon tabs */
.tabs { height: 33px; background: #272727; display: flex; border-bottom: 1px solid #4a4547; }
.tabs > button { width: 85px; background: #4b4b4b; color: #f0f0f0; font-size: 18px; line-height: 24px; padding-bottom: 3px; border-right: 1px solid #272727; }
.tabs > .file { width: 98px; background: #656565; border: 0; }
.tabs > .on { background: #dfdfdf; color: #222; border: 0; }
.tabs > button:nth-child(n+7) { width: 121px; }
.tabtools { margin-left: auto; display: flex; gap: 7px; padding: 2px 4px 0 0; }
.tabtools svg { width: 22px; height: 22px; }

/* ribbon */
.ribbon { display: flex; border-bottom: 2px solid #575757; }
.group, .rest { display: flex; flex-direction: column; border-right: 1px solid #a2a2a2; }
.rest { flex: 1; border: 0; }
.tools { height: 104px; padding: 2px 3px 0; display: flex; gap: 6px; background: #dfdfdf; }
.tools.lead { padding-left: 7px; }
.tools.tight { gap: 5px; }
.band { height: 29px; background: #cbcbcb; display: flex; align-items: center; justify-content: center; gap: 5px; }
.big { width: 60px; display: flex; flex-direction: column; align-items: center; gap: 10px; padding-top: 5px; white-space: normal; }
.big > svg { width: 40px; height: 40px; }
.big.fit { width: 39px; margin-left: 4px; }
.big.wide { margin-left: 4px; }
.col { display: flex; flex-direction: column; gap: 4px; align-items: flex-start; }
.col.second { margin-left: 10px; }
.small { height: 30px; border: 1px solid transparent; padding: 0 4px; display: flex; align-items: center; gap: 5px; }
.small > svg { width: 20px; height: 20px; }
.small > .caret { width: 10px; height: 6px; margin-left: 3px; }
.small:disabled { color: #a9a9a9; }
.small.pressed { background: #cfd1d2; border-color: #7d7f80; }
.rule { width: 1px; height: 84px; margin: 8px 5px 0 0; background: #bdbdbd; }

/* main area */
main { flex: 1; display: flex; min-height: 0; border-bottom: 2px solid #5a5a5a; }
aside { width: 558px; flex: none; background: #cacaca; border-right: 3px solid #6b6b6b; display: flex; flex-direction: column; }
.sidetabs { height: 36px; background: #6b6b6b; display: flex; }
.sidetabs button { display: flex; align-items: center; gap: 5px; padding: 0 9px; background: #7b7b7b; color: #c6c6c6; border-right: 1px solid #555; border-bottom: 1px solid #555; }
.sidetabs .on { background: #cacaca; color: #333; border-bottom: 0; gap: 8px; padding: 0 10px 0 12px; }
.w18 { width: 18px; height: 26px; }
.w24 { width: 24px; height: 24px; }
.sidehead { height: 36px; display: flex; align-items: center; gap: 9px; padding-left: 35px; overflow: hidden; }
.sidehead h2 { font-size: 15px; font-weight: 500; color: #333; flex: none; width: 365px; }
.sidehead button svg { width: 24px; height: 26px; }
.search { height: 32px; display: flex; align-items: center; padding-left: 14px; }
.filter { width: 20px; height: 20px; margin-right: 5px; }
.search label { width: 457px; height: 32px; background: #fff; display: flex; align-items: center; padding-right: 5px; }
.search input { flex: 1; height: 100%; padding: 0 6px; outline: 0; }
.search label svg { width: 12px; height: 12px; }
.search .caret { margin: 0 14px 0 7px; }
.plus { width: 12px; height: 12px; }
.tree { flex: 1; margin: 6px 6px 6px 10px; padding-top: 2px; background: #eee; list-style: none; }
.tree li { height: 26px; display: flex; align-items: center; gap: 6px; padding-left: 28px; }
.tree li.root { padding-left: 3px; }
.tree li svg { width: 20px; height: 20px; }
.tree li.open { padding-left: 10px; }
.tree li.open::before { content: ""; border: 5px solid transparent; border-left: 8px solid #7c7c7c; border-right: 0; margin-right: 4px; }
.canvas { flex: 1; display: flex; justify-content: center; align-items: flex-start; padding-top: 7px; background: linear-gradient(#c7dcec, #5b7ba8); }
.viewbar { width: 678px; height: 42px; border: 1px solid #7d7f80; background: #dedede; display: flex; align-items: center; justify-content: flex-end; gap: 3px; padding-right: 6px; }
.viewbar button { width: 34px; height: 34px; display: grid; place-items: center; border: 1px solid transparent; }
.viewbar .on { background: #cbcccd; border-color: #7d7f80; }
.viewbar svg { width: 26px; height: 26px; }

/* status bar */
footer { height: 40px; display: flex; align-items: center; padding: 0 21px 0 7px; background: #dedede; position: relative; }
.st { width: 26px; height: 26px; margin: 3px 4px 0 0; display: grid; place-items: center; border: 1px solid transparent; }
.st.on { background: #cfcfcf; border-color: #8a8a8a; }
.st > svg { width: 24px; height: 24px; }
.sline { width: 1px; height: 30px; background: #999; margin-left: 6px; }
.sline.push { margin-left: auto; }
.sline.far { margin-left: 48px; }
.pair + .sline { margin-left: 2px; }
footer p { font-size: 13px; margin-left: 7px; padding-bottom: 4px; display: flex; align-items: center; gap: 6px; }
footer p::before { content: ""; width: 6px; height: 6px; border-radius: 50%; background: #1a6688; margin-bottom: 4px; }
.pair { height: 29px; margin-left: 2px; display: flex; border: 1px solid #aaa; background: #f8f8f8; }
.pair button { width: 32px; display: grid; place-items: center; }
.pair .drop { width: 18px; border-left: 1px solid #bbb; }
.pair svg { width: 20px; height: 20px; }
.pair .caret { width: 10px; height: 6px; }
.combo { height: 28px; display: flex; align-items: center; border: 1px solid #a9acae; background: #f8f8f8; position: relative; }
.combo select { appearance: none; flex: 1; min-width: 0; align-self: stretch; padding: 0 28px 0 8px; outline: 0; }
.combo::after { content: ""; position: absolute; right: 0; top: 0; bottom: 0; width: 19px; border-left: 1px solid #a9acae; pointer-events: none; }
.combo::before { content: ""; position: absolute; right: 5px; top: 50%; margin-top: -3px; border: 4px solid transparent; border-top: 5px solid #666; border-bottom: 0; pointer-events: none; }
.geo { width: 217px; margin-left: 119px; }

/* site watermark over the lower right corner */
.mark { position: absolute; right: 16px; bottom: 5px; width: 170px; pointer-events: none; }
.mark .zh { font-size: 40px; line-height: 46px; margin-bottom: -3px; font-style: italic; font-weight: 300; color: #000; white-space: nowrap; }
.mark b { font-weight: 300; color: #fb6a33; }
.mark svg { position: absolute; left: 66px; top: -18px; width: 20px; height: 42px; }
.mark .url { font: italic 16px/20px "DejaVu Sans", sans-serif; color: #969696; white-space: nowrap; }

/* parameters window */
.dialog { position: absolute; left: 539px; top: 149px; width: 926px; border: 1px solid #85898a; background: #eeeff1; box-shadow: 1px 2px 12px rgba(0, 0, 0, .45); color: #3a3a3a; }
.dlgtitle { height: 36px; background: #dadedf; display: grid; place-items: center; border: 1px solid #f4f5f6; border-bottom: 0; position: relative; }
.dlgtitle h2 { font-size: 15px; color: #222; }
.dlgctl { position: absolute; right: 12px; top: 12px; display: flex; gap: 13px; }
.dlgctl svg { width: 12px; height: 12px; }
.menu { height: 39px; display: flex; align-items: center; gap: 21px; padding: 2px 0 0 11px; border-bottom: 1px solid #c6c8ca; }
.menu button { font-size: 17px; line-height: 24px; }
.dlgbody { padding: 19px 13px 20px; }
fieldset { margin: 0; padding: 0 11px 13px 13px; border: 1px solid #c3c5c7; min-width: 0; }
legend { margin: 0; padding: 0 4px; line-height: 20px; color: #222; }
.scope { display: flex; align-items: center; gap: 5px; padding-top: 7px; }
.kind { width: 334px; }
.part { flex: 1; height: 30px; padding-left: 8px; }
.part svg { width: 20px; height: 20px; }
.part select { padding-left: 0; }
.sq { width: 35px; height: 35px; flex: none; border: 1px solid #a9acae; background: #f8f8f8; display: grid; place-items: center; }
.sq svg { width: 26px; height: 26px; }
.splitter { height: 6px; margin: 16px 0 5px; border-top: 1px solid #dfe1e3; border-bottom: 1px solid #b9bbbd; }
.panel { border: 1px solid #c3c5c7; padding: 3px 7px 7px; }
.filterrow { display: flex; align-items: center; padding: 0 2px 2px; }
.filterrow .combo { flex: 1; margin: 0 9px 0 4px; }
.btn { height: 30px; min-width: 66px; padding: 0 11px; flex: none; border: 1px solid #a9acae; background: #f8f8f8; }
.filterrow .btn { min-width: 81px; }
.tablerow { display: flex; }
.frame { flex: 1; min-width: 0; border: 1px solid #a9acae; padding: 1px; background: #fff; position: relative; }
table { width: 100%; table-layout: fixed; border-collapse: separate; border-spacing: 0; }
col { width: 86px; }
col.gut { width: 18px; }
col.last { width: auto; }
th { height: 27px; padding: 4px 0 0 11px; font-weight: 400; text-align: left; color: #222; background: #f9f9f9; border-right: 1px solid #d2d5d7; border-bottom: 1px solid #cfd1d3; white-space: nowrap; }
td { height: 30px; padding: 0 3px; color: #868686; border-right: 1px solid #e6eaeb; border-bottom: 1px solid #e6eaeb; white-space: nowrap; overflow: hidden; }
th.gut, td.gut { background: #d6d6d6; border: 0; padding: 0; }
th:last-child, td:last-child { border-right: 0; }
td span { display: block; overflow: hidden; mask-image: linear-gradient(90deg, #000 85%, transparent); }
td.sel { background: #a8e2fc; color: #333; outline: 1px dotted #222; outline-offset: -1px; }
td.edit, td.full { color: #000; }
td.ck { padding: 0; text-align: center; line-height: 0; }
td svg { display: inline-block; vertical-align: middle; }
td.full { padding: 0 0 0 2px; line-height: 26px; }
td.full svg { width: 26px; height: 26px; }
td.lock { padding-left: 5px; }
td.lock svg { width: 16px; height: 18px; margin-right: 2px; }
input[type="checkbox"] { appearance: none; width: 15px; height: 15px; border: 1px solid #6e6e6e; background: #fff center / 13px 13px no-repeat; vertical-align: middle; }
input[type="checkbox"]:checked { background-image: url("data:image/svg+xml,%3Csvg xmlns='http://www.w3.org/2000/svg' viewBox='0 0 13 13'%3E%3Cpath d='M2 6 5 10 11 2' fill='none' stroke='%23333' stroke-width='2'/%3E%3C/svg%3E"); }
input[type="checkbox"]:disabled { border-color: #d6d6d6; }
input[type="checkbox"]:disabled:checked { background-image: url("data:image/svg+xml,%3Csvg xmlns='http://www.w3.org/2000/svg' viewBox='0 0 13 13'%3E%3Cpath d='M2 6 5 10 11 2' fill='none' stroke='%23c4c4c4' stroke-width='2'/%3E%3C/svg%3E"); }
.under { border-left: 18px solid #d6d6d6; padding-top: 24px; }
.hscroll { display: flex; height: 18px; border: 1px solid #c6c8ca; background: #f8f8f8; }
.hscroll button { width: 17px; display: grid; place-items: center; }
.hscroll svg { width: 6px; height: 10px; }
.track { flex: 1; background: #dddedf; border-left: 1px solid #a9acae; }
.thumb { width: 96%; height: 100%; background: #f7f7f7; border-right: 1px solid #a9acae; }
.note { position: absolute; border: 2px solid #c8303a; pointer-events: none; }
.note.weight { left: 13px; right: -3px; top: 174px; height: 35px; }
.note.volume { left: 15px; right: 8px; top: 325px; height: 67px; }
.movers { width: 30px; display: flex; flex-direction: column; align-items: center; justify-content: center; gap: 15px; }
.movers svg { width: 16px; height: 16px; }
.actions { display: flex; align-items: center; gap: 4px; padding-right: 3px; }
.actions .main { width: 249px; margin-left: auto; }
.dlgfoot { border-top: 1px solid #c3c5c7; display: flex; gap: 11px; padding: 12px 13px 13px; }
.dlgfoot .btn { width: 70px; }
.dlgfoot .ok { margin-left: auto; background: #a3e1fc; border-color: #7fbfe0; }
```
